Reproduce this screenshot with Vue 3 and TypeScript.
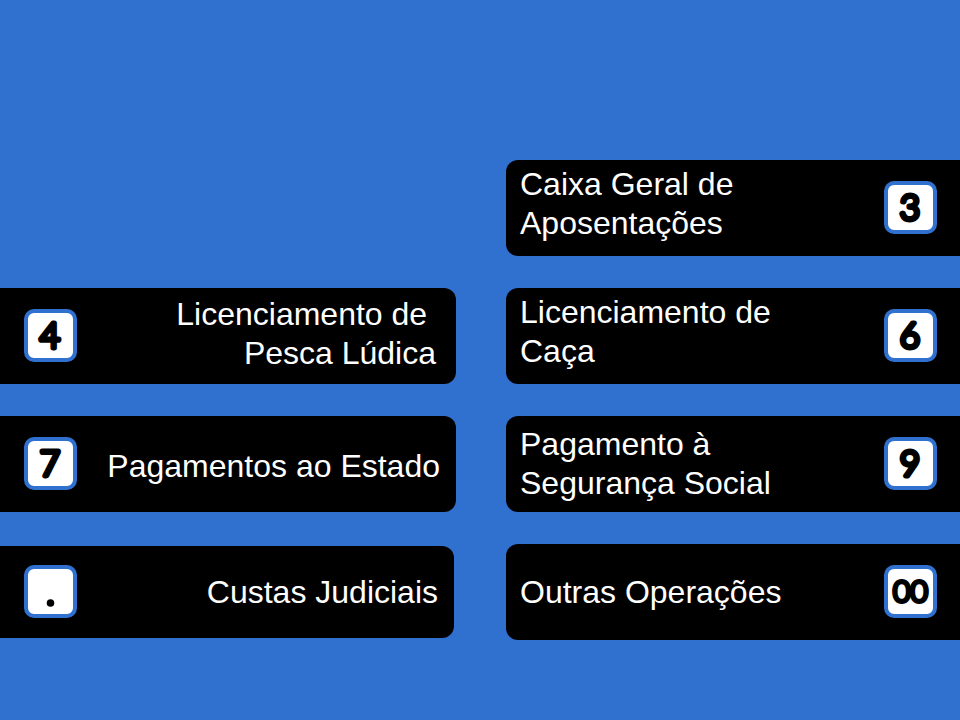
<script setup lang="ts">
interface Option {
  key: string
  lines: string[]
  side: 'left' | 'right'
  align?: 'raised' | 'lowered' | 'inset'
  compact?: boolean
}

const options: Option[] = [
  { key: '3', lines: ['Caixa Geral de', 'Aposentações'], side: 'right', align: 'raised' },
  { key: '4', lines: ['Licenciamento de\u00a0', 'Pesca Lúdica'], side: 'left', align: 'inset' },
  { key: '6', lines: ['Licenciamento de', 'Caça'], side: 'right', align: 'raised' },
  { key: '7', lines: ['Pagamentos ao Estado'], side: 'left', align: 'lowered' },
  { key: '9', lines: ['Pagamento à', 'Segurança Social'], side: 'right' },
  { key: '.', lines: ['Custas Judiciais'], side: 'left', compact: true },
  { key: '00', lines: ['Outras Operações'], side: 'right' },
]
</script>

<template>
  <main class="menu">
    <button
      v-for="option in options"
      :key="option.key"
      type="button"
      class="option"
      :class="[option.side, option.align, { compact: option.compact }]"
    >
      <span class="label">
        <span v-for="line in option.lines" :key="line" class="line">{{ line }}</span>
      </span>
      <span class="keycap">
        <svg class="face" viewBox="0 0 45 45" aria-hidden="true">
          <circle v-if="option.key === '.'" cx="22.5" cy="34" r="3.8" />
          <text v-else-if="option.key === '00'" class="digit double" x="22.5" y="33">00</text>
          <text v-else class="digit" x="22" y="35">{{ option.key }}</text>
        </svg>
      </span>
    </button>
  </main>
</template>

<style>
body {
  background: #3071cf;
}
</style>

<style scoped>
.menu {
  display: grid;
  grid-template-columns: 456fr 454fr;
  grid-auto-rows: minmax(96px, auto);
  gap: 32px 50px;
  padding: 160px 0 80px;
  font-family: "Liberation Sans", Arial, sans-serif;
}

.option {
  display: flex;
  align-items: center;
  justify-content: space-between;
  box-sizing: border-box;
  margin: 0;
  border: 0;
  background: #000;
  color: #fff;
  font: inherit;
  font-size: 32px;
  line-height: 39px;
  cursor: pointer;
}

.right {
  grid-column: 2;
  padding: 0 23px 0 14px;
  border-radius: 12px 0 0 12px;
  text-align: left;
}

.left {
  grid-column: 1;
  flex-direction: row-reverse;
  padding: 0 16px 0 24px;
  border-radius: 0 12px 12px 0;
  text-align: right;
}

.compact {
  margin: 2px 2px 2px 0;
}

.line {
  display: block;
}

.raised .label {
  padding-bottom: 8px;
}

.lowered .label {
  padding-top: 4px;
}

.inset .label {
  padding: 0 4px 4px 0;
}

.keycap {
  flex: none;
  box-sizing: border-box;
  width: 53px;
  height: 53px;
  margin-bottom: 2px;
  border: 4px solid #3071cf;
  border-radius: 10px;
  background: #fff;
}

.face {
  display: block;
  width: 100%;
  height: 100%;
}

.digit {
  font-family: Lato, sans-serif;
  font-size: 35px;
  font-weight: 300;
  fill: #000;
  stroke: #000;
  stroke-width: 5px;
  stroke-linejoin: round;
  text-anchor: middle;
}

.double {
  font-size: 30px;
  stroke-width: 4px;
}
</style>
